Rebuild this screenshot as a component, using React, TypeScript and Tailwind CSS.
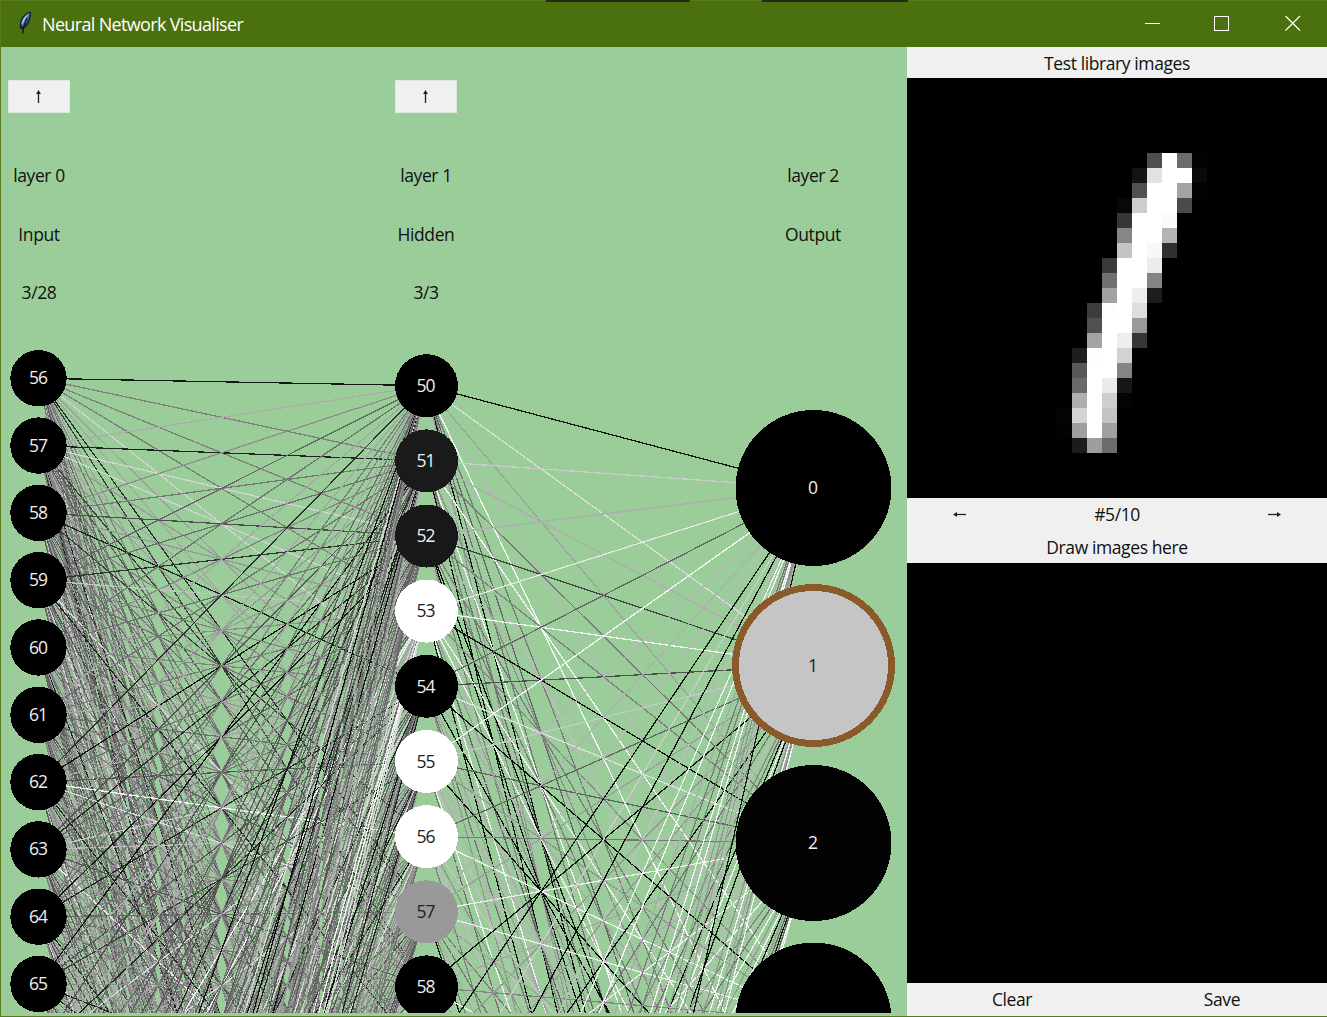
import React from "react";

const INPUT_X = 38.5;
const HIDDEN_X = 426;
const OUTPUT_X = 813;

const inputY = (i: number) => 378.3 + 67.3 * i;
const hiddenY = (j: number) => 385.7 + 75.15 * j;
const outputY = (k: number) => 488 + 177.5 * k;

// Repeatable pseudo-random weight in the range 0..1 for an edge.
function weight(a: number, b: number, seed: number) {
  let h = Math.imul(a * 73 + b * 1979 + seed * 7919 + 17, 2654435761);
  h ^= h >>> 15;
  h = Math.imul(h, 2246822519);
  h ^= h >>> 13;
  h = Math.imul(h, 3266489917);
  h ^= h >>> 16;
  return (h >>> 0) / 4294967296;
}

const gray = (v: number) => `rgb(${v},${v},${v})`;

const inputShades: Record<string, number> = {
  "0-0": 22, "0-1": 125, "0-2": 125, "0-3": 122, "0-4": 212, "0-5": 158, "0-6": 165, "0-7": 40, "0-8": 60, "0-9": 160,
  "1-0": 172, "1-1": 34, "1-2": 214, "1-3": 212, "1-4": 150, "1-5": 165, "1-6": 150, "1-7": 60,
  "2-0": 140, "2-1": 118, "2-2": 78, "2-3": 150, "2-4": 30, "2-5": 130, "2-6": 60,
  "3-0": 100, "3-1": 110, "3-2": 50, "3-3": 196, "3-4": 130, "3-5": 110,
  "4-0": 110, "4-1": 130, "4-2": 110, "4-3": 140, "4-4": 130, "4-5": 150,
  "5-0": 165, "5-1": 110, "5-2": 155, "5-3": 120, "5-4": 165, "5-5": 110, "5-6": 120,
  "6-0": 45, "6-1": 150, "6-2": 16, "6-4": 165, "6-5": 85, "6-6": 245,
  "7-0": 165, "7-5": 200, "7-6": 190, "7-11": 235,
  "8-0": 120, "8-2": 20, "8-7": 100, "9-0": 130, "9-1": 20, "9-5": 60,
  "10-0": 165, "11-0": 110, "12-0": 140,
  "13-3": 245, "14-3": 240, "16-0": 18, "18-0": 95, "21-0": 12, "22-1": 15, "24-3": 240, "25-3": 245,
  "19-1": 30, "18-1": 190, "23-4": 20, "20-3": 170,
};

// Shades of the strongest hidden -> output edges, keyed by "hidden-output".
const hiddenShades: Record<string, number> = {
  "0-0": 18, "0-1": 222, "0-2": 160, "0-3": 184, "0-4": 250, "0-5": 120,
  "1-0": 204, "1-1": 172, "1-2": 120, "1-3": 250, "1-4": 190, "1-5": 140,
  "2-0": 172, "2-1": 64, "2-2": 125, "2-3": 180, "2-4": 120, "2-6": 10, "2-7": 20,
  "3-0": 232, "3-1": 245, "3-2": 12, "3-3": 135, "3-4": 245,
  "4-0": 100, "4-1": 80, "4-2": 225, "4-3": 10, "4-4": 170,
  "5-0": 248, "5-1": 200, "5-2": 95, "5-3": 145, "5-4": 10,
  "6-0": 180, "6-1": 100, "6-2": 118, "6-3": 245, "6-4": 180,
  "7-0": 175, "7-1": 155, "7-2": 240, "7-3": 240, "7-4": 160,
  "8-0": 185, "8-1": 15, "8-2": 165, "8-3": 130, "8-4": 245,
  "9-0": 15, "9-1": 150, "9-2": 175, "10-0": 205, "10-2": 240, "11-0": 12, "11-1": 15,
  "12-0": 190, "13-0": 240, "14-0": 248, "15-0": 170, "24-1": 245, "24-0": 20,
};

type Line = { x1: number; y1: number; x2: number; y2: number; shade: number };

function buildLines(): Line[] {
  const lines: Line[] = [];
  for (let i = 0; i < 28; i++) {
    for (let j = 0; j < 25; j++) {
      const w = weight(i, j, 1);
      const extreme = weight(i, j, 5);
      let shade = Math.round(80 + w * 95);
      if (extreme > 0.95) shade = 215;
      else if (extreme < 0.07) shade = 35;
      lines.push({ x1: INPUT_X, y1: inputY(i), x2: HIDDEN_X, y2: hiddenY(j), shade: inputShades[`${i}-${j}`] ?? shade });
    }
  }
  for (let j = 0; j < 25; j++) {
    for (let k = 0; k < 10; k++) {
      const w = weight(j, k, 9);
      let shade = Math.round(90 + w * 110);
      const extreme = weight(j, k, 14);
      if (extreme > 0.89) shade = 246;
      else if (extreme < 0.14) shade = 15;
      lines.push({ x1: HIDDEN_X, y1: hiddenY(j), x2: OUTPUT_X, y2: outputY(k), shade: hiddenShades[`${j}-${k}`] ?? shade });
    }
  }
  return lines;
}

const LINES = buildLines();
const HIDDEN_FILLS = ["#000000", "#1a1a1a", "#181818", "#ffffff", "#000000", "#ffffff", "#ffffff", "#999999", "#000000"];
const OUTPUT_FILLS = ["#000000", "#c5c5c5", "#030303", "#000000"];

function NodeLabel({ x, y, dark, children }: { x: number; y: number; dark?: boolean; children: React.ReactNode }) {
  return (
    <text x={x} y={y} textAnchor="middle" className={dark ? "fill-[#222]" : "fill-[#eee]"}>
      {children}
    </text>
  );
}

function Network() {
  return (
    <svg
      width="905"
      height="673"
      viewBox="1 340 905 673"
      className="block text-[17.5px] tracking-[-1px]"
      shapeRendering="crispEdges"
    >
      {LINES.map((l, n) => (
        <line key={n} x1={l.x1} y1={l.y1} x2={l.x2} y2={l.y2} stroke={gray(l.shade)} strokeWidth="1.25" />
      ))}
      {Array.from({ length: 10 }, (_, i) => (
        <g key={i}>
          <circle cx={INPUT_X} cy={inputY(i)} r="28.2" fill="#000" />
          <NodeLabel x={INPUT_X - 0.5} y={inputY(i) + 6}>{56 + i}</NodeLabel>
        </g>
      ))}
      {HIDDEN_FILLS.map((fill, j) => (
        <g key={j}>
          <circle cx={HIDDEN_X + 0.5} cy={hiddenY(j)} r="31.5" fill={fill} />
          <NodeLabel x={HIDDEN_X - 0.5} y={hiddenY(j) + 6.3} dark={fill === "#ffffff" || fill === "#999999"}>
            {50 + j}
          </NodeLabel>
        </g>
      ))}
      {OUTPUT_FILLS.map((fill, k) => (
        <g key={k}>
          <circle
            cx={OUTPUT_X + 0.5}
            cy={outputY(k)}
            r="78"
            fill={fill}
            stroke={k === 1 ? "#8b5a2b" : "none"}
            strokeWidth="7"
          />
          {k < 3 && <NodeLabel x={OUTPUT_X - 0.5} y={outputY(k) + 6.3} dark={k === 1}>{k}</NodeLabel>}
        </g>
      ))}
    </svg>
  );
}

// Lit pixels of the digit on a 28x28 grid: [row, first column, brightness...].
const DIGIT: number[][] = [
  [5, 16, 78, 255, 108, 3],
  [6, 15, 20, 226, 255, 255, 9],
  [7, 15, 80, 255, 255, 164, 2],
  [8, 14, 8, 205, 255, 255, 75],
  [9, 14, 54, 255, 255, 250],
  [10, 14, 134, 255, 255, 180],
  [11, 14, 196, 255, 248, 48],
  [12, 13, 58, 255, 255, 236],
  [13, 13, 112, 255, 255, 132],
  [14, 13, 162, 255, 238, 29],
  [15, 12, 60, 253, 255, 222],
  [16, 12, 80, 255, 255, 154],
  [17, 12, 163, 255, 238, 54],
  [18, 11, 30, 253, 255, 210],
  [19, 11, 88, 255, 255, 132],
  [20, 11, 106, 255, 234, 22],
  [21, 11, 174, 255, 206, 4],
  [22, 10, 4, 212, 255, 196],
  [23, 10, 3, 158, 255, 160],
  [24, 11, 28, 158, 108],
];

function DigitImage() {
  return (
    <svg width="420" height="420" viewBox="0 0 420 420" className="block bg-black" shapeRendering="crispEdges">
      {DIGIT.map(([row, start, ...values]) =>
        values.map((v, n) => (
          <rect key={`${row}-${n}`} x={(start + n) * 15} y={row * 15} width="15" height="15" fill={gray(v)} />
        )),
      )}
    </svg>
  );
}

function Feather() {
  return (
    <svg width="14" height="24" viewBox="0 0 14 24">
      <path d="M13 0.6C7.5 1.2 1.2 7.5 1.6 16.5L4 18.6L7 16.8C11.2 13.5 13.6 6.5 13 0.6Z" fill="#17202b" />
      <path d="M11.6 2C7 3.5 3 9 3.3 14.5L5.4 16C9.4 12.5 11.6 7 11.6 2Z" fill="#4477bd" />
      <path d="M11 2.4C7 4.5 4 9 3.4 13.2L5.2 12C7 8 8.8 5 11 2.4Z" fill="#a5cced" />
      <path d="M9 7C7.5 10 5.5 14 4.6 22.8" stroke="#11151a" strokeWidth="1.4" fill="none" />
    </svg>
  );
}

function Arrow({ className }: { className?: string }) {
  return (
    <svg width="13" height="9" viewBox="0 0 13 9" className={className}>
      <path d="M2 4.5H13" stroke="#222" strokeWidth="1.3" />
      <path d="M0 4.5L4 2V7Z" fill="#222" />
    </svg>
  );
}

function LayerHeader({ index, kind, page }: { index: number; kind: string; page?: string }) {
  return (
    <div className="flex w-[76px] flex-col items-center whitespace-nowrap pt-[33px] leading-[24px]">
      <div className="flex h-[33px] w-[62px] items-center justify-center">
        {page && (
          <button className="flex h-full w-full items-center justify-center border border-[#dfe9df] bg-[#f0f0f0]">
            <Arrow className="mr-[2px] rotate-90" />
          </button>
        )}
      </div>
      <div className="mt-[50px]">layer {index}</div>
      <div className="mt-[35px]">{kind}</div>
      <div className="mt-[34px]">{page}</div>
    </div>
  );
}

export default function App() {
  return (
    <div className="flex h-[1017px] w-[1327px] flex-col overflow-hidden border-b border-l border-[#5a7a20] bg-[#9acd9a] font-['Open_Sans','Noto_Sans',sans-serif] text-[17.5px] tracking-[-0.4px] text-[#111]">
      <header className="relative flex h-[47px] shrink-0 items-center border-t border-[#5a7a20] bg-[#4b700e] text-white">
        <div className="absolute -top-px left-[545px] h-[2px] w-[144px] bg-[#222a18]" />
        <div className="absolute -top-px left-[761px] h-[2px] w-[146px] bg-[#222a18]" />
        <div className="ml-[17px] mt-[-2px]"><Feather /></div>
        <h1 className="ml-[10px] text-[18px] tracking-[-0.66px]">Neural Network Visualiser</h1>
        <svg className="ml-auto mr-[25px] mt-[-2px]" width="157" height="18" viewBox="0 0 157 18" fill="none" stroke="#fff">
          <path d="M0 9.5H15" />
          <rect x="69.5" y="2.5" width="14" height="14" />
          <path d="M140.5 2L155 16.5M155 2L140.5 16.5" strokeWidth="1.2" />
        </svg>
      </header>
      <main className="flex min-h-0 flex-1">
        <section className="flex w-[906px] shrink-0 flex-col">
          <div className="flex h-[293px] shrink-0 justify-between pr-[56px]">
            <LayerHeader index={0} kind="Input" page="3/28" />
            <LayerHeader index={1} kind="Hidden" page="3/3" />
            <LayerHeader index={2} kind="Output" />
          </div>
          <Network />
        </section>
        <aside className="flex w-[420px] shrink-0 flex-col bg-[#f0f0f0]">
          <div className="flex h-[31px] items-center justify-center pt-[2px]">Test library images</div>
          <DigitImage />
          <div className="grid h-[33px] grid-cols-[105px_210px_105px] place-items-center">
            <button><Arrow /></button>
            <span>#5/10</span>
            <button><Arrow className="rotate-180" /></button>
          </div>
          <div className="flex h-[32px] items-center justify-center">Draw images here</div>
          <div className="h-[420px] bg-black" />
          <div className="grid flex-1 grid-cols-2 place-items-center">
            <button>Clear</button>
            <button>Save</button>
          </div>
        </aside>
      </main>
    </div>
  );
}
